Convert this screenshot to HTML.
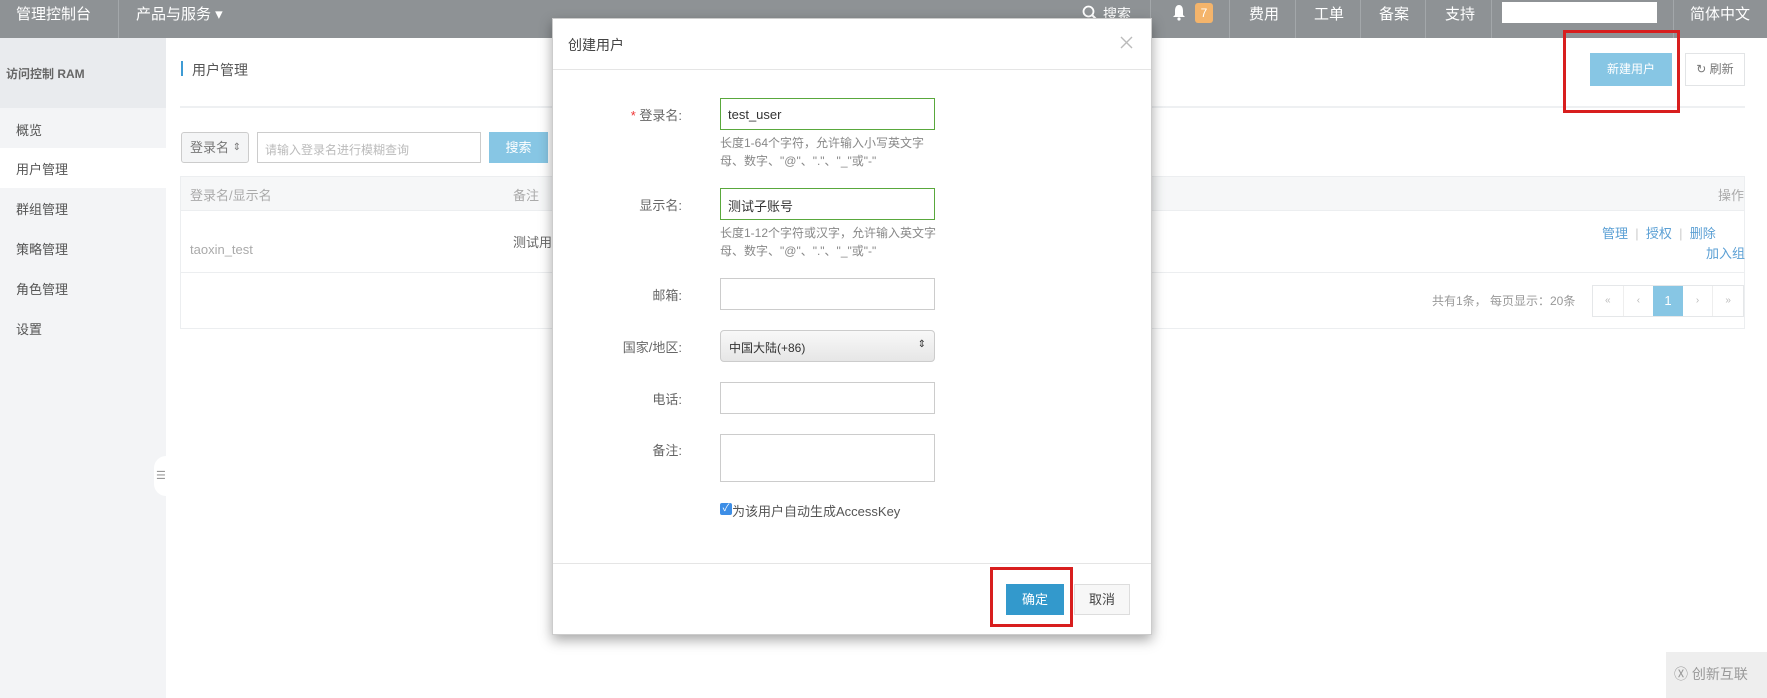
<!DOCTYPE html>
<html><head><meta charset="utf-8"><style>
*{box-sizing:border-box;margin:0;padding:0}
body{width:1767px;height:698px;overflow:hidden;position:relative;background:#fff;font-family:"Liberation Sans","Noto Sans CJK SC",sans-serif;font-size:13px;color:#666}
.a{position:absolute}
.top{left:0;top:0;width:1767px;height:38px;background:#8e9295;color:#fff;font-size:15px}
.top span{position:absolute;top:3px}
.vd{position:absolute;top:0;width:1px;height:38px;background:#a3a7aa}
.side{left:0;top:38px;width:166px;height:660px;background:#f3f4f6}
.side div{position:absolute;left:16px;font-size:13px;color:#555}
.inp{position:absolute;border:1px solid #ccc;background:#fff}
.lbl{position:absolute;right:0;width:120px;text-align:right;color:#666}
.help{position:absolute;left:720px;font-size:12px;color:#888;line-height:18px;width:220px}
.red{position:absolute;border:3px solid #d81e1e}
</style></head><body>
<div class="a top">
<span style="left:16px">管理控制台</span>
<div class="vd" style="left:118px"></div>
<span style="left:136px">产品与服务 ▾</span>
<svg class="a" style="left:1082px;top:5px" width="16" height="16" viewBox="0 0 16 16"><circle cx="6.5" cy="6.5" r="5" fill="none" stroke="#fff" stroke-width="1.8"/><line x1="10" y1="10" x2="14.5" y2="14.5" stroke="#fff" stroke-width="2"/></svg>
<span style="left:1103px;font-size:14px;top:4px">搜索</span>
<div class="vd" style="left:1150px"></div>
<svg class="a" style="left:1172px;top:4px" width="14" height="17" viewBox="0 0 14 17"><path d="M7 1C4 1 3 4 3 7v4L1 13h12l-2-2V7c0-3-1-6-4-6z" fill="#fff"/><circle cx="7" cy="15" r="1.6" fill="#fff"/></svg>
<div class="a" style="left:1195px;top:3px;width:18px;height:20px;background:#f4b46b;border-radius:3px;color:#fff;font-size:12px;text-align:center;line-height:20px">7</div>
<div class="vd" style="left:1229px"></div>
<span style="left:1249px">费用</span><div class="vd" style="left:1295px"></div>
<span style="left:1314px">工单</span><div class="vd" style="left:1360px"></div>
<span style="left:1379px">备案</span><div class="vd" style="left:1425px"></div>
<span style="left:1445px">支持</span><div class="vd" style="left:1491px"></div>
<div class="a" style="left:1502px;top:2px;width:155px;height:21px;background:#fff"></div>
<div class="vd" style="left:1673px"></div>
<span style="left:1690px">简体中文</span>
</div>
<div class="a side">
<div style="left:0;top:0;width:166px;height:70px;background:#e9ebee"></div>
<div style="top:27px;left:6px;font-weight:bold;color:#666;font-size:12px">访问控制 RAM</div>
<div style="top:82px">概览</div>
<div style="left:0;top:110px;width:166px;height:40px;background:#fff"></div>
<div style="top:121px">用户管理</div>
<div style="top:161px">群组管理</div>
<div style="top:201px">策略管理</div>
<div style="top:241px">角色管理</div>
<div style="top:281px">设置</div>
</div>
<div class="a" style="left:154px;top:456px;width:12px;height:40px;background:#fff;border-radius:12px 0 0 12px;color:#999;font-size:11px;line-height:40px;padding-left:2px">☰</div>
<div class="a" style="left:181px;top:61px;width:2px;height:15px;background:#3e9bd4"></div>
<div class="a" style="left:192px;top:60px;font-size:14px;color:#555">用户管理</div>
<div class="a" style="left:180px;top:106px;width:1565px;height:2px;background:#eef0f2"></div>
<div class="inp" style="left:181px;top:132px;width:68px;height:31px;background:#f4f5f6;border-radius:3px;padding:7px 8px;color:#777;line-height:16px">登录名<span style="position:absolute;right:7px;top:7px;font-size:10px">⇕</span></div>
<div class="inp" style="left:257px;top:132px;width:224px;height:31px;padding:8px 7px;color:#bbb;font-size:12px">请输入登录名进行模糊查询</div>
<div class="a" style="left:489px;top:132px;width:59px;height:31px;background:#87c6e4;color:#fff;text-align:center;line-height:31px">搜索</div>
<div class="a" style="left:180px;top:176px;width:1565px;height:153px;border:1px solid #eceef0"></div>
<div class="a" style="left:181px;top:177px;width:1563px;height:34px;background:#f6f7f8;border-bottom:1px solid #eceef0"></div>
<div class="a" style="left:190px;top:185px;color:#aaa">登录名/显示名</div>
<div class="a" style="left:513px;top:185px;color:#aaa">备注</div>
<div class="a" style="left:1718px;top:185px;color:#aaa">操作</div>
<div class="a" style="left:181px;top:272px;width:1563px;height:1px;background:#eceef0"></div>
<div class="a" style="left:190px;top:242px;color:#aaa">taoxin_test</div>
<div class="a" style="left:513px;top:232px;color:#666">测试用户</div>
<div class="a" style="left:1602px;top:223px;color:#5a9fd4">管理 <span style="color:#ccc">&nbsp;|&nbsp;</span> 授权 <span style="color:#ccc">&nbsp;|&nbsp;</span> 删除</div>
<div class="a" style="left:1706px;top:243px;color:#5a9fd4">加入组</div>
<div class="a" style="left:1432px;top:292px;color:#999;font-size:12px">共有1条， 每页显示：20条</div>
<div class="a" style="left:1592px;top:285px;width:152px;height:32px;border:1px solid #e5e7e9;display:flex;color:#bbb;font-size:10px">
<div style="flex:1;text-align:center;line-height:30px;border-right:1px solid #eee">«</div><div style="flex:1;text-align:center;line-height:30px">‹</div><div style="flex:1;background:#87c6e4;color:#fff;text-align:center;line-height:30px;font-size:13px">1</div><div style="flex:1;text-align:center;line-height:30px;border-right:1px solid #eee">›</div><div style="flex:1;text-align:center;line-height:30px">»</div></div>
<div class="a" style="left:1590px;top:53px;width:82px;height:33px;background:#87c6e4;color:#fff;text-align:center;line-height:33px;font-size:12px">新建用户</div>
<div class="a" style="left:1685px;top:53px;width:60px;height:33px;border:1px solid #e2e4e6;text-align:center;line-height:31px;color:#777;font-size:12px">↻ 刷新</div>
<div class="red" style="left:1563px;top:30px;width:117px;height:83px"></div>
<!-- modal -->
<div class="a" style="left:552px;top:18px;width:600px;height:617px;background:#fff;border:1px solid #ccc;box-shadow:0 5px 12px rgba(0,0,0,.35)"></div>
<div class="a" style="left:568px;top:35px;font-size:14px;color:#444">创建用户</div>
<svg class="a" style="left:1120px;top:36px" width="13" height="13" viewBox="0 0 13 13"><path d="M1 1L12 12M12 1L1 12" stroke="#bbb" stroke-width="1.4"/></svg>
<div class="a" style="left:553px;top:69px;width:598px;height:1px;background:#e5e5e5"></div>
<div class="lbl" style="left:562px;top:105px"><span style="color:#e33">* </span>登录名:</div>
<div class="inp" style="left:720px;top:98px;width:215px;height:32px;border-color:#59a83c;padding:8px 7px;color:#333">test_user</div>
<div class="help" style="top:134px">长度1-64个字符，允许输入小写英文字母、数字、"@"、"."、"_"或"-"</div>
<div class="lbl" style="left:562px;top:195px">显示名:</div>
<div class="inp" style="left:720px;top:188px;width:215px;height:32px;border-color:#59a83c;padding:7px 7px;color:#333">测试子账号</div>
<div class="help" style="top:224px">长度1-12个字符或汉字，允许输入英文字母、数字、"@"、"."、"_"或"-"</div>
<div class="lbl" style="left:562px;top:285px">邮箱:</div>
<div class="inp" style="left:720px;top:278px;width:215px;height:32px"></div>
<div class="lbl" style="left:562px;top:337px">国家/地区:</div>
<div class="inp" style="left:720px;top:330px;width:215px;height:32px;border-radius:4px;background:linear-gradient(#f8f8f8,#e6e6e6);padding:8px 8px;color:#333;font-size:12px">中国大陆(+86)<span style="position:absolute;right:8px;top:8px;font-size:10px">⇕</span></div>
<div class="lbl" style="left:562px;top:389px">电话:</div>
<div class="inp" style="left:720px;top:382px;width:215px;height:32px"></div>
<div class="lbl" style="left:562px;top:440px">备注:</div>
<div class="inp" style="left:720px;top:434px;width:215px;height:48px"></div>
<div class="a" style="left:720px;top:503px;width:12px;height:12px;background:#3d8ee6;border-radius:2px;color:#fff;font-size:10px;line-height:12px;text-align:center">✓</div>
<div class="a" style="left:732px;top:501px;color:#555">为该用户自动生成AccessKey</div>
<div class="a" style="left:553px;top:563px;width:598px;height:1px;background:#e5e5e5"></div>
<div class="a" style="left:1006px;top:584px;width:58px;height:31px;background:#3399cc;color:#fff;text-align:center;line-height:31px">确定</div>
<div class="a" style="left:1074px;top:584px;width:56px;height:31px;border:1px solid #ddd;background:#f7f7f7;color:#444;text-align:center;line-height:29px">取消</div>
<div class="red" style="left:990px;top:567px;width:83px;height:60px"></div>
<div class="a" style="left:1666px;top:652px;width:101px;height:46px;background:#eeeeee;color:#999;font-size:14px;padding:12px 0 0 8px">Ⓧ 创新互联</div>
</body></html>
